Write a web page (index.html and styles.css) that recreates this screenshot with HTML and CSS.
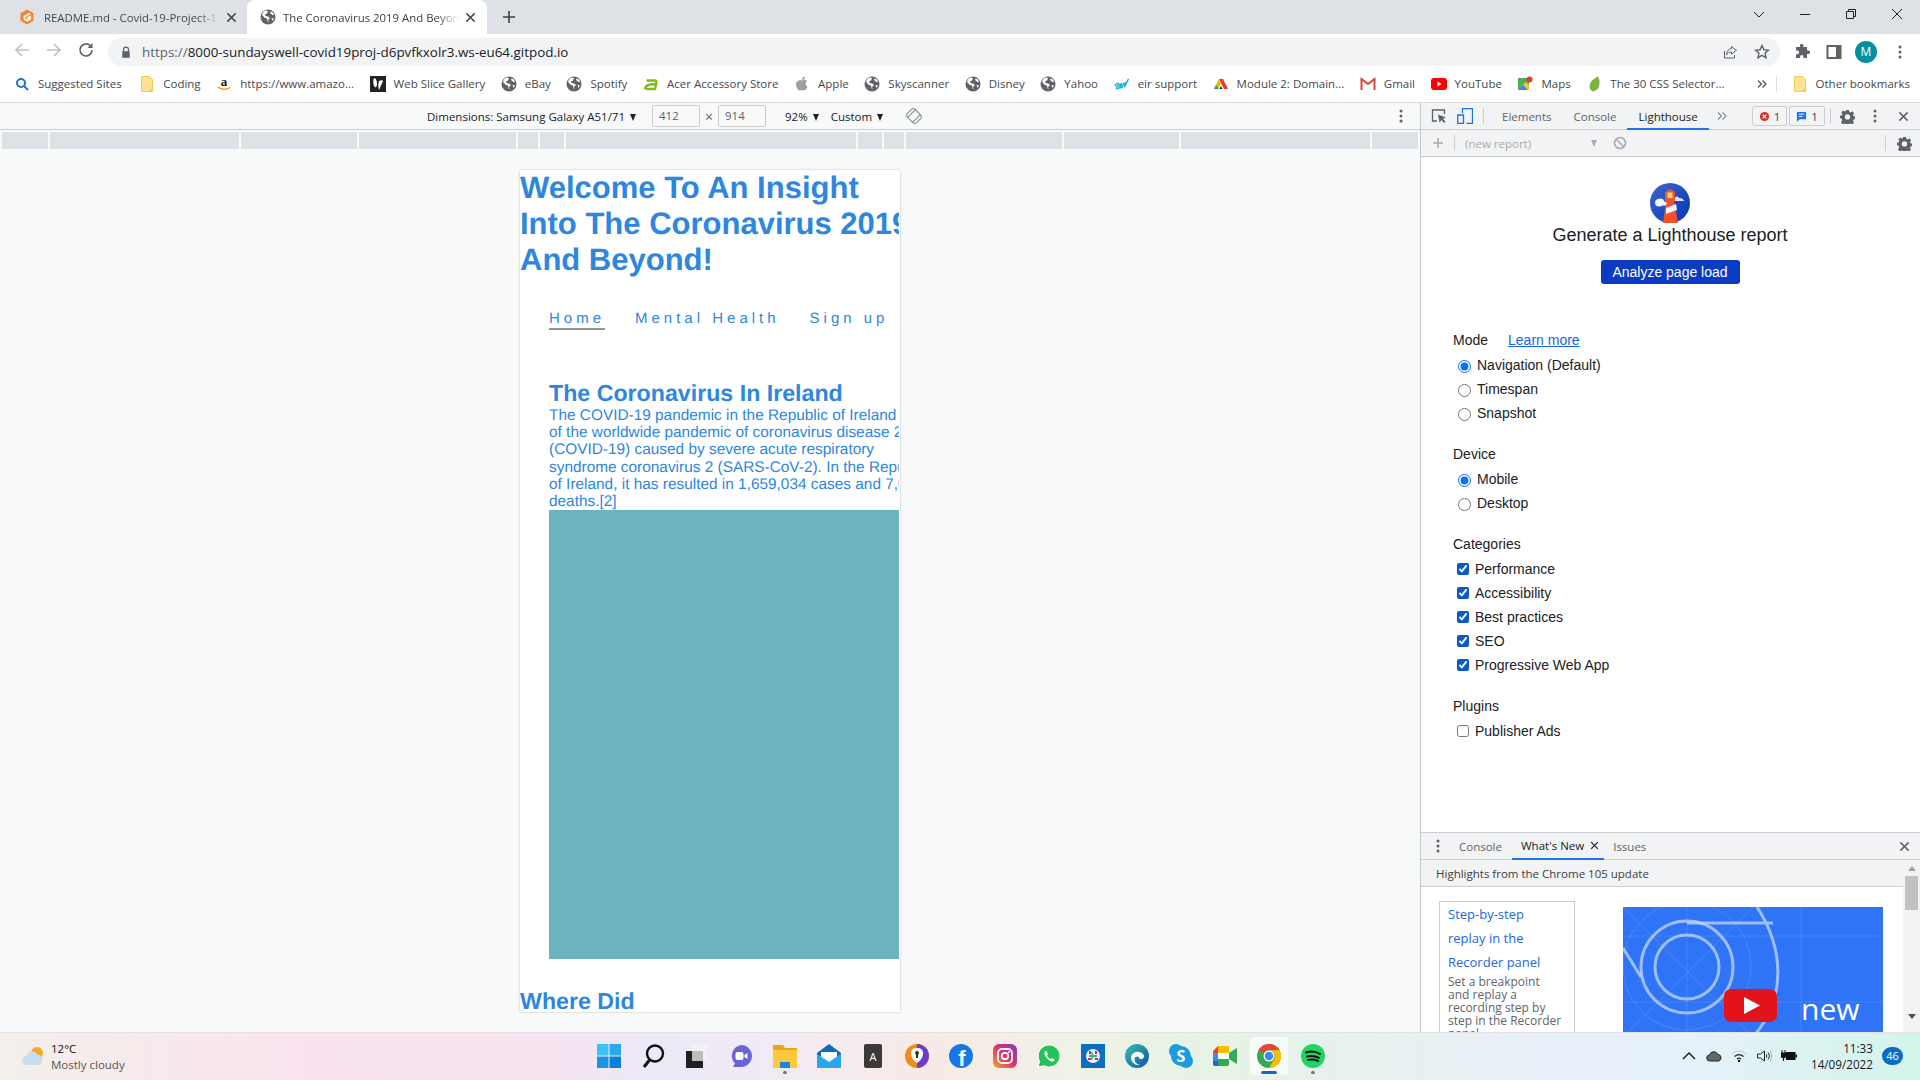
FILE: index.html
```html
<!DOCTYPE html>
<html lang="en">
<head>
	<meta charset="UTF-8">
	<title>The Coronavirus 2019 And Beyond</title>
	<link rel="stylesheet" href="styles.css">
</head>
<body>
	<svg class="defs" width="0" height="0">
		<symbol id="globe" viewBox="0 0 16 16">
			<circle cx="8" cy="8" r="7.5" fill="#5f6368"/>
			<path d="M2 6l3 3 2 .5.5 2.5 1 2-.5-3 2-2-2-1.5-2.5-.5-.5-1.5 2-1 1-2.5-2.5-.5C3.500 2 2.500 4 2 6zM10 2.500l.5 2 2 1.500 1.500 0-1-2.500zM11.500 9l1 3 1.500-2.500z" fill="#fff"/>
		</symbol>
		<symbol id="folder" viewBox="0 0 16 16">
			<path d="M2.500 .5h8l3 3v12h-11z" fill="#fde293" stroke="#f5c94f"/>
			<path d="M11 13h2.500v2.500H11z" fill="#f5c94f"/>
		</symbol>
		<symbol id="gear" viewBox="0 0 16 16">
			<path d="M6.500 1h3l.4 2 1.300.6 1.800-1.100 2 2.100-1.100 1.700.5 1.400 2 .4v2.800l-2 .4-.5 1.400 1.100 1.700-2 2.100-1.800-1.100-1.300.6-.4 2h-3l-.4-2-1.300-.6-1.800 1.100-2-2.100 1.100-1.700L2 10.300 0 9.900V7.100l2-.4.500-1.400L1.400 3.600l2-2.100 1.800 1.100 1.300-.6zM8 5.700a2.800 2.800 0 100 5.600 2.800 2.800 0 000-5.600z" fill="#5f6368" fill-rule="evenodd"/>
		</symbol>
		<symbol id="kebab" viewBox="0 0 4 16">
			<circle cx="2" cy="3" r="1.500"/><circle cx="2" cy="8" r="1.500"/><circle cx="2" cy="13" r="1.500"/>
		</symbol>
		<symbol id="cross" viewBox="0 0 12 12">
			<path d="M1.500 1.500l9 9M10.500 1.500l-9 9" stroke="currentColor" stroke-width="1.600" fill="none"/>
		</symbol>
	</svg>

	<div class="tabstrip">
		<div class="tab">
			<svg class="fav" viewBox="0 0 16 16"><path d="M8 .5l6.500 3.700v7.600L8 15.500l-6.500-3.700V4.200z" fill="#f0862e"/><path d="M11 4.500L5.500 7.500v2.800L8 11.800l3-1.700V7.800L8 9.500" fill="none" stroke="#fff" stroke-width="1.700"/></svg>
			<span class="tab-title">README.md - Covid-19-Project-1</span>
			<svg class="tab-x"><use href="#cross"/></svg>
		</div>
		<div class="tab active">
			<svg class="fav"><use href="#globe"/></svg>
			<span class="tab-title">The Coronavirus 2019 And Beyond!</span>
			<svg class="tab-x"><use href="#cross"/></svg>
		</div>
		<svg class="new-tab" viewBox="0 0 12 12"><path d="M6 0v12M0 6h12" stroke="#3c4043" stroke-width="1.600"/></svg>
		<div class="win-btns">
			<svg viewBox="0 0 12 12"><path d="M1 4l5 5 5-5" fill="none" stroke="#202124"/></svg>
			<svg viewBox="0 0 12 12"><path d="M1 6.500h10" stroke="#202124"/></svg>
			<svg viewBox="0 0 12 12"><path d="M3.500 3V1.500h7v7H9M1.500 3.500h7v7h-7z" fill="none" stroke="#202124"/></svg>
			<svg viewBox="0 0 12 12"><path d="M1 1l10 10M11 1L1 11" stroke="#202124"/></svg>
		</div>
	</div>

	<div class="toolbar">
		<svg class="nav-ic" viewBox="0 0 16 16"><path d="M15 8H2M8 2L2 8l6 6" fill="none" stroke="#bdc1c6" stroke-width="1.600"/></svg>
		<svg class="nav-ic" viewBox="0 0 16 16"><path d="M1 8h13M8 2l6 6-6 6" fill="none" stroke="#bdc1c6" stroke-width="1.600"/></svg>
		<svg class="nav-ic" viewBox="0 0 16 16"><path d="M14 8a6 6 0 11-1.800-4.300" fill="none" stroke="#5f6368" stroke-width="1.700"/><path d="M14.500 1v5h-5z" fill="#5f6368"/></svg>
		<div class="omnibox">
			<svg class="lock" viewBox="0 0 12 14"><path d="M3 6V4a3 3 0 016 0v2" fill="none" stroke="#5f6368" stroke-width="1.500"/><path d="M1.500 6h9v8h-9z" fill="#5f6368"/></svg>
			<span class="url"><span class="url-dim">https://</span>8000-sundayswell-covid19proj-d6pvfkxolr3.ws-eu64.gitpod.io</span>
			<svg class="omni-ic" viewBox="0 0 16 16"><path d="M2.500 7v7h10v-3" fill="none" stroke="#5f6368"/><path d="M9.500 2.500l5 3.800-5 3.700V8C7 8 5.500 9 4.500 11c0-4 2-6 5-6.500z" fill="none" stroke="#5f6368"/></svg>
			<svg class="omni-ic" viewBox="0 0 16 16"><path d="M8 1.500l1.900 4.300 4.600.4-3.500 3 1.100 4.600L8 11.300l-4.100 2.500L5 9.200l-3.500-3 4.600-.4z" fill="none" stroke="#5f6368" stroke-width="1.400"/></svg>
		</div>
		<div class="tool-right">
			<svg viewBox="0 0 16 16"><path d="M6 1.500a1.700 1.700 0 013.400 0V3H13v3.500h1.300a1.800 1.800 0 010 3.600H13V14H9.500v-1.300a1.700 1.700 0 00-3.400 0V14H2v-3.800h1.300a1.800 1.800 0 000-3.600H2V3h4z" fill="#5f6368"/></svg>
			<svg viewBox="0 0 16 16"><path d="M1.500 2h13v12h-13z" fill="none" stroke="#5f6368" stroke-width="2"/><path d="M10 2h5v12h-5z" fill="#5f6368"/></svg>
			<div class="avatar">M</div>
			<svg class="kebab-ic"><use href="#kebab"/></svg>
		</div>
	</div>

	<div class="bookmarks">
		<div class="bm"><svg viewBox="0 0 16 16"><circle cx="7" cy="7" r="4" fill="none" stroke="#1a73c8" stroke-width="2"/><path d="M10 10l4 4" stroke="#1a73c8" stroke-width="2"/></svg>Suggested Sites</div>
		<div class="bm"><svg><use href="#folder"/></svg>Coding</div>
		<div class="bm"><svg viewBox="0 0 16 16"><text x="8" y="10" class="amz">a</text><path d="M2 11c3 3 9 3 12 .5" fill="none" stroke="#f90" stroke-width="1.500"/></svg>https://www.amazo...</div>
		<div class="bm"><svg viewBox="0 0 16 16"><path d="M0 0h16v16H0z" fill="#202124"/><path d="M4 2c2 0 3 3 3 6 0 2-1 5-3 2-1-3-1-6 0-8zM9 5c2-1 4-1 4 0l-4 9c-1-3-1-6 0-9z" fill="#fff"/></svg>Web Slice Gallery</div>
		<div class="bm"><svg><use href="#globe"/></svg>eBay</div>
		<div class="bm"><svg><use href="#globe"/></svg>Spotify</div>
		<div class="bm"><svg viewBox="0 0 16 16"><path d="M2 13c0-3 3-5 10-5M3.500 4.500H12c2 0 1.500 2 1 4l-1 4.500H5c-2 0-3-1-3-1" fill="none" stroke="#83b81a" stroke-width="2.400"/></svg>Acer Accessory Store</div>
		<div class="bm"><svg viewBox="0 0 16 16"><path d="M8 4.500c1-.8 4-1.300 5 1-2 1.500-1.500 4 .5 5-1 2.500-2 4-3.500 4-1 0-1.500-.5-2.200-.5s-1.300.5-2.200.5C3.500 14.500 2 10.500 2 8c0-3.500 3.500-4.500 6-3.500zM8 4c0-2 1-3 3-3.500C11 2.500 10 4 8 4z" fill="#9aa0a6"/></svg>Apple</div>
		<div class="bm"><svg><use href="#globe"/></svg>Skyscanner</div>
		<div class="bm"><svg><use href="#globe"/></svg>Disney</div>
		<div class="bm"><svg><use href="#globe"/></svg>Yahoo</div>
		<div class="bm"><svg viewBox="0 0 16 16"><path d="M1 10c1-3 4-3 4-1.500S2 10 2.500 12 5 12 6 10l1.500-3-1 5 1.500-.5 1.500-4 1.500-.5-.5 4 4-8" fill="none" stroke="#18b4d6" stroke-width="1.500"/></svg>eir support</div>
		<div class="bm"><svg viewBox="0 0 16 16"><path d="M6 3h4l5 10h-4z" fill="#e23b2e"/><path d="M6 3L1 13h4l3-6z" fill="#f5b400"/><path d="M1 13l2-4 3 4z" fill="#2ea24c"/><path d="M6.500 13L8 10l1.500 3z" fill="#202124"/></svg>Module 2: Domain...</div>
		<div class="bm"><svg viewBox="0 0 16 16"><path d="M1.500 14V3l6.500 5 6.500-5v11" fill="none" stroke="#d9453a" stroke-width="2"/></svg>Gmail</div>
		<div class="bm"><svg viewBox="0 0 16 16"><rect y="2" width="16" height="12" rx="3" fill="#f00"/><path d="M6.500 5.500l4 2.500-4 2.500z" fill="#fff"/></svg>YouTube</div>
		<div class="bm"><svg viewBox="0 0 16 16"><path d="M1 2h11v12H1z" fill="#4caf50"/><path d="M1 14L9 6l3 3v5z" fill="#fbc02d"/><path d="M1 14l5-5 5 5z" fill="#4285f4"/><circle cx="12.500" cy="3.500" r="3" fill="#e53935"/></svg>Maps</div>
		<div class="bm"><svg viewBox="0 0 16 16"><path d="M12 .5c3 5 2 14-5 15C2 14 1.500 5 12 .5z" fill="#7cb342"/></svg>The 30 CSS Selector...</div>
		<div class="bm-end">
			<svg class="more" viewBox="0 0 10 10"><path d="M1 1.500L4.500 5 1 8.500M5.500 1.500L9 5 5.500 8.500" fill="none" stroke="#5f6368" stroke-width="1.500"/></svg>
			<span class="bm-sep"></span>
			<div class="bm"><svg><use href="#folder"/></svg>Other bookmarks</div>
		</div>
	</div>

	<div class="main">
		<div class="viewport">
			<div class="device-bar">
				<span class="dim-label">Dimensions: Samsung Galaxy A51/71 <i class="caret"></i></span>
				<span class="dim-box">412</span>
				<span class="dim-x">×</span>
				<span class="dim-box">914</span>
				<span class="dim-zoom">92% <i class="caret"></i></span>
				<span class="dim-custom">Custom <i class="caret"></i></span>
				<svg class="rotate" viewBox="0 0 16 16"><g transform="rotate(-45 8 8)" fill="none" stroke="#80868b"><rect x="2.500" y="1.500" width="11" height="13" rx="3"/><path d="M2.500 4.500h11M2.500 11.500h11"/></g></svg>
				<svg class="kebab-ic dev-kebab"><use href="#kebab"/></svg>
			</div>
			<div class="ruler"><i></i><i></i><i></i><i></i><i></i><i></i><i></i><i></i><i></i><i></i><i></i><i></i><i></i></div>
			<div class="stage">
				<div class="page">
					<h1>Welcome To An Insight<br>Into The Coronavirus 2019<br>And Beyond!</h1>
					<ul class="site-nav">
						<li class="current">Home</li>
						<li>Mental Health</li>
						<li>Sign up</li>
					</ul>
					<section class="intro">
						<h2>The Coronavirus In Ireland</h2>
						<p>The COVID-19 pandemic in the Republic of Ireland is part<br>of the worldwide pandemic of coronavirus disease 2019<br>(COVID-19) caused by severe acute respiratory<br>syndrome coronavirus 2 (SARS-CoV-2). In the Republic<br>of Ireland, it has resulted in 1,659,034 cases and 7,000<br>deaths.[2]</p>
						<div class="hero"></div>
					</section>
					<h2 class="where">Where Did</h2>
				</div>
			</div>
		</div>

		<div class="devtools">
			<div class="dt-bar">
				<svg class="dt-inspect" viewBox="0 0 16 16"><path d="M6 13H1.500V2h12v4" fill="none" stroke="#5f6368" stroke-width="1.300"/><path d="M7 6.500l8 3-3 1.300 2.500 3-1.500 1.300-2.500-3-2 2.400z" fill="#5f6368"/></svg>
				<svg class="dt-device" viewBox="0 0 16 16"><path d="M5.500 5V.7h10v14.600h-6M.7 7h5.800v8.300H.7z" fill="none" stroke="#1a73e8" stroke-width="1.300"/></svg>
				<span class="dt-sep"></span>
				<span class="dt-tab">Elements</span>
				<span class="dt-tab">Console</span>
				<span class="dt-tab on">Lighthouse</span>
				<svg class="dt-more" viewBox="0 0 10 10"><path d="M1 1.500L4.500 5 1 8.500M5.500 1.500L9 5 5.500 8.500" fill="none" stroke="#80868b" stroke-width="1.100"/></svg>
				<span class="count first"><svg viewBox="0 0 12 12"><circle cx="6" cy="6" r="5" fill="#d93025"/><path d="M4 4l4 4M8 4l-4 4" stroke="#fff" stroke-width="1.300"/></svg>1</span>
				<span class="count"><svg viewBox="0 0 12 12"><path d="M1 1h10v8H4l-3 3z" fill="#1a73e8"/><path d="M3 3.500h6M3 6h4" stroke="#fff"/></svg>1</span>
				<span class="dt-sep sep2"></span>
				<svg class="dt-gear"><use href="#gear"/></svg>
				<svg class="kebab-ic dt-kebab"><use href="#kebab"/></svg>
				<svg class="dt-close"><use href="#cross"/></svg>
			</div>
			<div class="dt-sub">
				<svg class="sub-plus" viewBox="0 0 12 12"><path d="M6 1v10M1 6h10" stroke="#a8abaf" stroke-width="1.500"/></svg>
				<span class="dt-sep sub-sep"></span>
				<span class="report-name">(new report)</span>
				<i class="caret grey"></i>
				<svg class="sub-block" viewBox="0 0 14 14"><circle cx="7" cy="7" r="5.500" fill="none" stroke="#a8abaf" stroke-width="1.600"/><path d="M3 3l8 8" stroke="#a8abaf" stroke-width="1.600"/></svg>
				<span class="dt-sep sub-sep2"></span>
				<svg class="dt-gear sub-gear"><use href="#gear"/></svg>
			</div>

			<div class="lh-panel">
				<div class="lh-head">
					<svg class="lh-logo" viewBox="0 0 40 40">
						<defs><linearGradient id="lhblue" x1="0" y1="0" x2="1" y2="1"><stop offset="0" stop-color="#3f65cf"/><stop offset="1" stop-color="#0536b3"/></linearGradient></defs>
						<circle cx="20" cy="20" r="20" fill="url(#lhblue)"/>
						<path d="M13 40l3-22h8l4 22a20 20 0 01-15 0z" fill="#f4502a"/>
						<path d="M15 9l5-3 5 3v9H15z" fill="#e8573a"/>
						<path d="M17.500 9.500h5V15h-5z" fill="#fdd663"/>
						<path d="M16 25l10-4 1 6-11 4z" fill="#f1f3f4"/>
						<path d="M5 20a3.500 3.500 0 014-4c2-1 5 0 5 2l3 2c0 2-2 3-4 2.500C10 24 5 24 5 20z" fill="#f1f3f4"/>
						<path d="M25 15c1-2 3-2 4 0 2-.5 5 1 5 3h-9z" fill="#dbe3f7"/>
					</svg>
					<h3>Generate a Lighthouse report</h3>
					<button class="analyze">Analyze page load</button>
				</div>
				<form class="lh-form">
					<div class="lh-label">Mode<a class="learn">Learn more</a></div>
					<label class="rad"><input type="radio" name="mode" checked>Navigation (Default)</label>
					<label class="rad"><input type="radio" name="mode">Timespan</label>
					<label class="rad"><input type="radio" name="mode">Snapshot</label>
					<div class="lh-label gap">Device</div>
					<label class="rad"><input type="radio" name="device" checked>Mobile</label>
					<label class="rad"><input type="radio" name="device">Desktop</label>
					<div class="lh-label gap">Categories</div>
					<label class="chk"><input type="checkbox" checked>Performance</label>
					<label class="chk"><input type="checkbox" checked>Accessibility</label>
					<label class="chk"><input type="checkbox" checked>Best practices</label>
					<label class="chk"><input type="checkbox" checked>SEO</label>
					<label class="chk"><input type="checkbox" checked>Progressive Web App</label>
					<div class="lh-label gap">Plugins</div>
					<label class="chk"><input type="checkbox">Publisher Ads</label>
				</form>
			</div>

			<div class="drawer">
				<div class="drawer-tabs">
					<svg class="kebab-ic drawer-kebab"><use href="#kebab"/></svg>
					<span class="dr-tab">Console</span>
					<span class="dr-tab on">What's New<svg class="dr-x"><use href="#cross"/></svg></span>
					<span class="dr-tab">Issues</span>
					<svg class="dt-close"><use href="#cross"/></svg>
				</div>
				<div class="drawer-body">
					<div class="drawer-main">
						<div class="highlights">Highlights from the Chrome 105 update</div>
						<div class="news">
							<div class="news-card">
								<a>Step-by-step replay in the Recorder panel</a>
								<p>Set a breakpoint<br>and replay a<br>recording step by<br>step in the Recorder<br>panel</p>
							</div>
							<div class="video">
								<svg viewBox="0 0 260 130">
									<rect width="260" height="130" fill="#2f74f6"/>
									<g fill="none" stroke="#fff" stroke-opacity=".12">
										<path d="M0 29h260M0 95h260M64 0v130M178 0v130"/>
										<circle cx="64" cy="59" r="64"/>
										<path d="M0 0l130 130M130 0L0 130"/>
									</g>
									<g fill="none" stroke="#c3d7fb" stroke-opacity=".75" stroke-width="3">
										<circle cx="64" cy="60" r="46"/>
										<circle cx="64" cy="60" r="32"/>
										<path d="M64 16h86M0 41l18 29M134 0c26 40 31 90-4 130"/>
									</g>
									<rect x="101" y="82" width="53" height="33" rx="7" fill="#e3131b"/>
									<path d="M121 90l16 8.500-16 8.500z" fill="#fff"/>
									<text x="178" y="113" class="vid-new">new</text>
								</svg>
							</div>
						</div>
					</div>
					<div class="dr-scroll">
						<i class="sc-up"></i>
						<b class="sc-thumb"></b>
						<i class="sc-down"></i>
					</div>
				</div>
			</div>
		</div>
	</div>

	<div class="taskbar">
		<div class="weather">
			<svg viewBox="0 0 24 24"><circle cx="16" cy="8" r="6" fill="#f9a825"/><path d="M6 20a4.500 4.500 0 01-.5-9 6 6 0 0111-1.500A5.500 5.500 0 0118 20z" fill="#c7ddf0"/></svg>
			<div><div class="temp">12°C</div><div class="sky">Mostly cloudy</div></div>
		</div>
		<div class="apps">
			<svg viewBox="0 0 24 24"><path d="M0 0h11.500v11.500H0z" fill="#3cc0f5"/><path d="M12.500 0H24v11.500H12.500z" fill="#2aa8ee"/><path d="M0 12.500h11.500V24H0z" fill="#1a94e6"/><path d="M12.500 12.500H24V24H12.500z" fill="#0b80d8"/></svg>
			<svg viewBox="0 0 24 24"><circle cx="14" cy="9.500" r="8" fill="none" stroke="#111" stroke-width="2.400"/><path d="M8.500 16L3 23" stroke="#111" stroke-width="3"/></svg>
			<svg viewBox="0 0 24 24"><path d="M7 1h15v16H7z" fill="#f2f2f2"/><path d="M1 7h17v17H1z" fill="#202020"/><path d="M7 7h11v10H7z" fill="#bdbdbd"/></svg>
			<svg viewBox="0 0 24 24"><path d="M12 1a11 11 0 0111 11 11 11 0 01-11 11H4l2-3.500A11 11 0 0112 1z" fill="#6b63d6"/><rect x="6.500" y="8" width="8" height="8" rx="2" fill="#fff"/><path d="M15.500 11l3-2v6l-3-2z" fill="#fff"/></svg>
			<div class="app-slot running">
				<svg viewBox="0 0 24 24"><path d="M0 1h10l2 3h12v4H0z" fill="#e8a61a"/><path d="M0 6h24v18H0z" fill="#fcc93a"/><path d="M7 18h10v6H7z" fill="#1a86d8"/></svg>
			</div>
			<svg viewBox="0 0 24 24"><path d="M12 0l12 9v15H0V9z" fill="#0f6cbd"/><path d="M4 8h16v6l-8 5-8-5z" fill="#fff"/><path d="M0 10l12 8 12-8v14H0z" fill="#2aa6ee"/></svg>
			<svg viewBox="0 0 24 24"><rect x="3" width="18" height="24" rx="2" fill="#3a3a3a"/><text x="12" y="17" class="tb-a">A</text></svg>
			<svg viewBox="0 0 24 24"><circle cx="12" cy="12" r="12" fill="#f28a1c"/><path d="M12 0a12 12 0 0112 12c0 6-5 12-12 12z" fill="#6a3fc8"/><path d="M12 4c4 0 6 2 6 5 0 5-3 8-6 10-3-2-6-5-6-10 0-3 2-5 6-5z" fill="#fff"/><circle cx="12" cy="9" r="2" fill="#333"/><path d="M11 10h2v4h-2z" fill="#333"/></svg>
			<svg viewBox="0 0 24 24"><circle cx="12" cy="12" r="12" fill="#1678e5"/><text x="13" y="22" class="tb-f">f</text></svg>
			<svg viewBox="0 0 24 24">
				<defs><linearGradient id="insta" x1="0" y1="1" x2="1" y2="0"><stop offset="0" stop-color="#f9a52b"/><stop offset=".5" stop-color="#e1306c"/><stop offset="1" stop-color="#7b3bc0"/></linearGradient></defs>
				<rect width="24" height="24" rx="6" fill="url(#insta)"/><rect x="5" y="5" width="14" height="14" rx="4" fill="none" stroke="#fff" stroke-width="1.800"/><circle cx="12" cy="12" r="3.200" fill="none" stroke="#fff" stroke-width="1.800"/><circle cx="16" cy="8" r="1" fill="#fff"/>
			</svg>
			<svg viewBox="0 0 24 24"><path d="M12 1a11 11 0 11-5 20.800L1 23l1.600-5.600A11 11 0 0112 1z" fill="#25c15a" stroke="#fff"/><path d="M8 7c-1 1-1 3 1 6s5 5 7 4.500c1-.3 1.500-1 1.500-2l-2.500-1.500-1 1c-2-.5-3.500-2-4-4l1-1L9.500 7z" fill="#fff"/></svg>
			<svg viewBox="0 0 24 24"><path d="M0 0h24v24H0z" fill="#0a6fc2"/><circle cx="12" cy="12" r="7" fill="#f4f4f4"/><path d="M9 7v3M15 7v3M7 15h3M14 15h3" stroke="#e01e5a" stroke-width="2"/><path d="M11 8v8" stroke="#36c5f0" stroke-width="2"/><path d="M8 12h8" stroke="#2eb67d" stroke-width="2"/></svg>
			<svg viewBox="0 0 24 24">
				<defs><linearGradient id="edge" x1="0" y1="0" x2="1" y2="1"><stop offset="0" stop-color="#36c2a8"/><stop offset="1" stop-color="#0d52a8"/></linearGradient></defs>
				<circle cx="12" cy="12" r="12" fill="url(#edge)"/><path d="M6 13c1-5 8-7 12-3 2 2 1 5-2 5-2 0-2-1-2-2-4-2-6 2-3 6 1 1 3 2 4 2-5 1-9-3-9-8z" fill="#fff"/>
			</svg>
			<svg viewBox="0 0 24 24"><circle cx="7" cy="7" r="7" fill="#1c9ce0"/><circle cx="17" cy="17" r="7" fill="#1c9ce0"/><circle cx="12" cy="12" r="10" fill="#1c9ce0"/><text x="12" y="17.500" class="tb-s">S</text></svg>
			<svg viewBox="0 0 24 24"><path d="M5 2h11v7H5z" fill="#fbbc04"/><path d="M0 7l5-5v7H0z" fill="#ea4335"/><path d="M0 9h5v8H0z" fill="#4285f4"/><path d="M0 17h5v5H2a2 2 0 01-2-2z" fill="#1967d2"/><path d="M5 15h11v5a2 2 0 01-2 2H5z" fill="#34a853"/><path d="M16 9l8-5v16l-8-5z" fill="#34a853"/><path d="M5 9h11v6H5z" fill="#fff"/></svg>
			<div class="app-slot focused">
				<svg viewBox="0 0 24 24"><circle cx="12" cy="12" r="12" fill="#34a853"/><path d="M12 0a12 12 0 0110.400 6H12a6 6 0 00-5.200 3L1.600 6A12 12 0 0112 0z" fill="#ea4335"/><path d="M22.400 6A12 12 0 0112 24l5.200-9A6 6 0 0012 6z" fill="#fbbc04"/><circle cx="12" cy="12" r="5.500" fill="#fff"/><circle cx="12" cy="12" r="4.300" fill="#4285f4"/></svg>
			</div>
			<div class="app-slot running">
				<svg viewBox="0 0 24 24"><circle cx="12" cy="12" r="12" fill="#1ed760"/><path d="M5 8.500c5-1.500 10-1 14 1.500M6 12.500c4-1 8-.7 12 1.300M7 16c3.500-.8 6.500-.5 10 1" fill="none" stroke="#111" stroke-width="2" stroke-linecap="round"/></svg>
			</div>
		</div>
		<div class="tray">
			<svg viewBox="0 0 14 14"><path d="M1 10l6-6 6 6" fill="none" stroke="#111" stroke-width="1.300"/></svg>
			<svg viewBox="0 0 16 14"><path d="M4 12a3 3 0 01-.5-6 4.500 4.500 0 018.500-.5A3.300 3.300 0 0112.500 12z" fill="#666" stroke="#222"/></svg>
			<svg viewBox="0 0 16 14"><path d="M1 5c4-4 10-4 14 0" fill="none" stroke="#c0c4c8"/><path d="M3.500 7.500c3-2.500 6-2.500 9 0M6 10c1.300-1 2.700-1 4 0" fill="none" stroke="#222" stroke-width="1.200"/><circle cx="8" cy="12" r="1.200"/></svg>
			<svg viewBox="0 0 16 14"><path d="M1.500 5h3l4-3v10l-4-3h-3z" fill="none" stroke="#222"/><path d="M10 5c1 1 1 3 0 4M12 3.500c1.800 2 1.800 5 0 7" fill="none" stroke="#222"/><path d="M14 2c2.300 3 2.300 7 0 10" fill="none" stroke="#aaa"/></svg>
			<svg viewBox="0 0 16 14"><path d="M1 1v3M4 1v3M0 4h5v2.500a2.500 2.500 0 01-5 0z" stroke="#111" fill="#111"/><path d="M2.500 9v3" stroke="#111"/><rect x="5" y="3" width="9.500" height="8" fill="#111"/><path d="M14.500 5.500H16v3h-1.500z" fill="#111"/></svg>
			<div class="clock"><div>11:33</div><div>14/09/2022</div></div>
			<span class="notify">46</span>
		</div>
	</div>
</body>
</html>
```

FILE: styles.css
```css
*{
	margin: 0;
	padding: 0;
	box-sizing: border-box;
}
html, body{
	width: 1920px;
	height: 1080px;
	overflow: hidden;
}
body{
	font-family: "Open Sans", "Liberation Sans", sans-serif;
	font-size: 11.500px;
	color: #3c4043;
	background: #fff;
}
svg{
	display: block;
	flex: none;
}
.defs{
	position: absolute;
}
.caret{
	display: inline-block;
	width: 0;
	height: 0;
	border-left: 3.500px solid transparent;
	border-right: 3.500px solid transparent;
	border-top: 7px solid #202124;
	margin-left: 2px;
}
.caret.grey{
	border-top-color: #a8abaf;
	margin-left: 60px;
}
.kebab-ic{
	width: 4px;
	height: 16px;
	fill: #5f6368;
}

/* browser chrome */
.tabstrip{
	height: 34px;
	background: #dee1e6;
	display: flex;
	align-items: flex-end;
	padding-left: 10px;
}
.tab{
	width: 237px;
	height: 34px;
	padding: 0 10px 0 4px;
	display: flex;
	align-items: center;
	position: relative;
	border-radius: 8px 8px 0 0;
	color: #45484d;
}
.tab + .tab{
	width: 240px;
	padding-left: 13px;
}
.tab.active{
	background: #fff;
	color: #3c4043;
}
.fav{
	width: 16px;
	height: 16px;
}
.tab:first-child .fav{
	margin-left: 5px;
}
.tab-title{
	margin-left: 7px;
	width: 176px;
	font-size: 11.400px;
	white-space: nowrap;
	overflow: hidden;
	-webkit-mask-image: linear-gradient(to right, #000 88%, transparent);
}
.tab:first-child .tab-title{
	margin-left: 9px;
}
.tab-x{
	width: 11px;
	height: 11px;
	margin-left: 6px;
	color: #45484d;
}
.tab:first-child .tab-x{
	margin-left: 7px;
}
.new-tab{
	width: 12px;
	height: 12px;
	margin: 0 auto 11px 16px;
}
.win-btns{
	display: flex;
	align-self: flex-start;
	gap: 34px;
	padding: 8px 17px 0 0;
}
.win-btns svg{
	width: 12px;
	height: 12px;
}
.toolbar{
	height: 32px;
	display: flex;
	align-items: center;
	padding: 4px 0 0 14px;
	background: #fff;
}
.nav-ic{
	width: 16px;
	height: 16px;
	margin-right: 16px;
	position: relative;
	top: -2px;
}
.nav-ic:nth-child(3){
	margin-right: 14px;
}
.omnibox{
	width: 1672px;
	height: 28px;
	background: #f1f3f4;
	border-radius: 14px;
	display: flex;
	align-items: center;
	padding: 0 10px 0 13px;
}
.lock{
	width: 10px;
	height: 12px;
}
.url{
	margin-left: 11px;
	font-size: 13.400px;
	color: #202124;
	white-space: nowrap;
}
.url-dim{
	color: #5f6368;
}
.omni-ic{
	width: 16px;
	height: 16px;
	margin-left: 16px;
}
.url + .omni-ic{
	margin-left: auto;
}
.tool-right{
	display: flex;
	align-items: center;
	padding-left: 14px;
}
.tool-right svg{
	width: 16px;
	height: 16px;
	margin-right: 16px;
}
.tool-right .kebab-ic{
	width: 4px;
	margin: 0 0 0 21px;
}
.avatar{
	width: 22px;
	height: 22px;
	border-radius: 50%;
	background: #00919e;
	color: #fff;
	text-align: center;
	line-height: 22px;
	font-size: 12px;
	margin-left: -3px;
}
.bookmarks{
	height: 37px;
	display: flex;
	align-items: center;
	gap: 15.600px;
	padding: 0 10px 1px 14px;
	border-bottom: 1px solid #dadce0;
	background: #fff;
	white-space: nowrap;
}
.bm{
	display: flex;
	align-items: center;
	gap: 8px;
	font-size: 11.500px;
	color: #45484d;
}
.bm:first-child{
	margin-right: 2px;
}
.bm svg{
	width: 16px;
	height: 16px;
}
.bm-end{
	margin-left: auto;
	display: flex;
	align-items: center;
}
.more{
	width: 10px;
	height: 10px;
	margin-right: 9px;
}
.bm-sep{
	width: 1px;
	height: 16px;
	background: #dadce0;
	margin-right: 15px;
}
.amz{
	font: bold 13px "Liberation Serif", serif;
	text-anchor: middle;
	fill: #111;
}

/* device mode */
.main{
	display: flex;
	height: 929px;
}
.viewport{
	width: 1420px;
	background: #f8f9f9;
	display: flex;
	flex-direction: column;
}
.device-bar{
	height: 27px;
	display: flex;
	align-items: center;
	padding-left: 427px;
	background: #f8f9f9;
	border-bottom: 1px solid #cbcdd1;
	color: #202124;
	white-space: nowrap;
}
.dim-box{
	width: 48px;
	height: 22px;
	border: 1px solid #ccc;
	border-radius: 2px;
	line-height: 20px;
	padding-left: 6px;
	color: #5f6368;
	margin-left: 16px;
}
.dim-x{
	margin: 0 0 0 5px;
	color: #5f6368;
	font-size: 14px;
}
.dim-x + .dim-box{
	margin-left: 5px;
}
.dim-zoom{
	margin-left: 19px;
}
.dim-custom{
	margin-left: 12px;
}
.rotate{
	width: 16px;
	height: 16px;
	margin-left: 23px;
}
.dev-kebab{
	margin-left: auto;
	margin-right: 17px;
}
.ruler{
	display: grid;
	grid-template-columns: 46px 189px 116px 157px 20px 24px 290px 24px 20px 156px 115px 189px 46px;
	gap: 2px;
	height: 17px;
	margin: 2px 0 0 2px;
}
.ruler i{
	background: #dee1e6;
}
.stage{
	flex: 1;
	padding: 21px 0 0 520px;
}

/* the page on the phone */
.page{
	width: 380px;
	height: 842px;
	background: #fff;
	border-right: 1px solid #fff;
	box-shadow: 0 0 2px rgba(0,0,0,0.25);
	overflow: hidden;
	white-space: nowrap;
	font-family: "Liberation Sans", Arial, sans-serif;
	color: #2e86de;
	text-rendering: geometricPrecision;
}
.page h1{
	font-size: 31px;
	line-height: 36px;
}
.site-nav{
	list-style: none;
	display: flex;
	gap: 30px;
	padding: 32px 0 0 29px;
	font-size: 15px;
	letter-spacing: 4px;
	height: 101px;
}
.site-nav li{
	height: 20px;
	line-height: 18px;
}
.site-nav .current{
	border-bottom: 2px solid #8a9499;
}
.intro{
	padding: 0 0 0 29px;
}
.intro h2, .where{
	font-size: 23.200px;
	line-height: 28px;
}
.intro p{
	font-size: 15.400px;
	line-height: 17.200px;
}
.hero{
	width: 360px;
	height: 449px;
	background: #6bb3be;
}
.where{
	margin-top: 28px;
}

/* devtools */
.devtools{
	width: 500px;
	border-left: 1px solid #c4c7cc;
	display: flex;
	flex-direction: column;
	background: #fff;
	color: #5f6368;
}
.dt-bar{
	height: 27px;
	display: flex;
	align-items: center;
	background: #f1f3f4;
	border-bottom: 1px solid #cbcdd1;
	padding-left: 10px;
}
.dt-inspect{
	width: 16px;
	height: 16px;
}
.dt-device{
	width: 16px;
	height: 16px;
	margin-left: 10px;
}
.dt-sep{
	width: 1px;
	height: 16px;
	background: #cbcdd1;
	margin-left: 10px;
}
.dt-tab{
	height: 27px;
	line-height: 27px;
	padding: 0 11px;
}
.dt-sep + .dt-tab{
	margin-left: 7px;
}
.dt-tab.on{
	color: #202124;
	border-bottom: 2px solid #1a73e8;
}
.dt-more{
	width: 10px;
	height: 10px;
	margin-left: 8px;
}
.count{
	display: flex;
	align-items: center;
	gap: 4px;
	height: 20px;
	border: 1px solid #cbcdd1;
	border-radius: 2px;
	padding: 0 6px;
	margin-left: 2px;
	color: #45484d;
}
.count.first{
	margin-left: 25px;
}
.count svg{
	width: 11px;
	height: 11px;
}
.sep2{
	margin-left: 5px;
}
.dt-gear{
	width: 15px;
	height: 15px;
	margin-left: 9px;
}
.dt-kebab{
	margin-left: 18px;
}
.dt-close{
	width: 11px;
	height: 11px;
	margin-left: 21px;
	color: #5f6368;
}
.dt-sub{
	height: 27px;
	display: flex;
	align-items: center;
	background: #f1f3f4;
	border-bottom: 1px solid #cbcdd1;
	padding-left: 11px;
}
.sub-plus{
	width: 12px;
	height: 12px;
}
.sub-sep{
	margin-left: 10px;
}
.report-name{
	margin-left: 10px;
	color: #a8abaf;
}
.sub-block{
	width: 14px;
	height: 14px;
	margin-left: 16px;
}
.sub-sep2{
	margin-left: auto;
}
.sub-gear{
	margin: 0 8px 0 11px;
}

/* lighthouse */
.lh-panel{
	flex: 1;
	font-family: "Liberation Sans", Arial, sans-serif;
	font-size: 14px;
	color: #202124;
	padding-top: 26px;
}
.lh-head{
	display: flex;
	flex-direction: column;
	align-items: center;
	margin-left: -1px;
}
.lh-logo{
	width: 40px;
	height: 40px;
}
.lh-head h3{
	font-size: 18px;
	font-weight: normal;
	line-height: 24px;
}
.analyze{
	margin-top: 13px;
	width: 139px;
	height: 24px;
	background: #0b3bc1;
	color: #fff;
	border: none;
	border-radius: 3px;
	font: 14px "Liberation Sans", Arial, sans-serif;
}
.lh-form{
	margin-top: 44px;
	padding-left: 32px;
}
.lh-label{
	height: 25px;
	line-height: 24px;
}
.lh-label.gap{
	margin-top: 17px;
}
.learn{
	margin-left: 20px;
	color: #1a66e8;
	text-decoration: underline;
}
.rad, .chk{
	display: flex;
	align-items: center;
	height: 24px;
}
.rad input{
	margin: 2px 6px 0 5px;
	accent-color: #0d6efd;
}
.chk input{
	width: 12px;
	height: 12px;
	margin: 0 6px 0 4px;
	accent-color: #0b57d0;
}

/* drawer */
.drawer{
	height: 200px;
	overflow: hidden;
	border-top: 1px solid #cbcdd1;
}
.drawer-tabs{
	height: 27px;
	display: flex;
	align-items: center;
	background: #f1f3f4;
	border-bottom: 1px solid #cbcdd1;
	padding-left: 15px;
}
.drawer-tabs .dt-close{
	margin-left: auto;
	margin-right: 10px;
}
.dr-tab{
	display: flex;
	align-items: center;
	height: 27px;
	padding: 0 9px;
}
.drawer-kebab + .dr-tab{
	margin-left: 10px;
	margin-right: 1px;
}
.dr-tab.on{
	color: #202124;
	border-bottom: 2px solid #1a73e8;
	padding-right: 5px;
}
.dr-x{
	width: 9px;
	height: 9px;
	margin-left: 6px;
	color: #202124;
}
.drawer-body{
	display: flex;
	height: 172px;
}
.drawer-main{
	flex: 1;
}
.highlights{
	height: 27px;
	line-height: 28px;
	background: #f1f3f4;
	border-bottom: 1px solid #cbcdd1;
	padding-left: 15px;
	color: #3c4043;
}
.news{
	display: flex;
	padding: 14px 0 0 18px;
}
.news-card{
	width: 136px;
	height: 180px;
	border: 1px solid #cbcdd1;
	padding: 0 8px;
}
.news-card a{
	display: block;
	color: #1a66e8;
	font-size: 13px;
	line-height: 24px;
	padding-right: 15px;
}
.news-card p{
	font-size: 12px;
	line-height: 13px;
	color: #5f6368;
	margin-top: 1px;
}
.video{
	margin: 6px 0 0 48px;
}
.video svg{
	width: 260px;
	height: 130px;
}
.vid-new{
	font: 30px "Open Sans", sans-serif;
	fill: #fff;
}
.dr-scroll{
	width: 17px;
	background: #f1f3f4;
	display: flex;
	flex-direction: column;
	align-items: center;
	padding-top: 6px;
}
.dr-scroll .sc-up{
	width: 0;
	height: 0;
	border-left: 4px solid transparent;
	border-right: 4px solid transparent;
	border-bottom: 5px solid #a3a3a3;
}
.sc-thumb{
	width: 13px;
	height: 34px;
	background: #c1c1c1;
	margin-top: 5px;
}
.dr-scroll .sc-down{
	width: 0;
	height: 0;
	border-left: 4px solid transparent;
	border-right: 4px solid transparent;
	border-top: 5px solid #505050;
	margin-top: 104px;
}

/* taskbar */
.taskbar{
	height: 48px;
	display: grid;
	grid-template-columns: 597px 1fr auto;
	align-items: center;
	padding-bottom: 2px;
	background: linear-gradient(to right, #f3efe9 0%, #fae3ef 16%, #f8e3f0 28%, #ece9f8 34%, #f3ebf2 42%, #f8e9e6 48%, #eff2e6 56%, #e6f3e4 62%, #e8eff8 80%, #e6f1fa 88%, #d2f5ea 100%);
	border-top: 1px solid #e6e2e6;
	position: relative;
	z-index: 2;
}
.weather{
	display: flex;
	align-items: center;
	padding: 2px 0 0 21px;
	gap: 6px;
}
.weather svg{
	width: 24px;
	height: 24px;
}
.temp{
	color: #111;
	line-height: 16px;
}
.sky{
	color: #555;
	line-height: 16px;
}
.apps{
	display: flex;
	align-items: center;
	gap: 20px;
}
.apps svg{
	width: 24px;
	height: 24px;
}
.app-slot{
	width: 24px;
	height: 24px;
	position: relative;
}
.app-slot svg{
	position: relative;
}
.running::after{
	content: "";
	position: absolute;
	left: 10px;
	top: 27px;
	width: 4px;
	height: 3px;
	border-radius: 2px;
	background: #77797c;
}
.focused::before{
	content: "";
	position: absolute;
	left: -7px;
	top: -7px;
	width: 38px;
	height: 38px;
	background: rgba(255,255,255,0.65);
	border-radius: 4px;
}
.focused::after{
	content: "";
	position: absolute;
	left: 4px;
	top: 27px;
	width: 16px;
	height: 3px;
	border-radius: 2px;
	background: #0b6cc4;
}
.tb-a{
	font: 11px "Open Sans", sans-serif;
	fill: #fff;
	text-anchor: middle;
}
.tb-f{
	font: bold 22px "Liberation Sans", sans-serif;
	fill: #fff;
	text-anchor: middle;
}
.tb-s{
	font: bold 16px "Open Sans", sans-serif;
	fill: #fff;
	text-anchor: middle;
}
.tray{
	display: flex;
	align-items: center;
	padding-right: 17px;
	gap: 9px;
}
.tray svg{
	width: 16px;
	height: 14px;
}
.clock{
	text-align: right;
	font-size: 11.700px;
	line-height: 16px;
	color: #1a1a1a;
	margin-left: 5px;
}
.notify{
	width: 21px;
	height: 18px;
	border-radius: 9px;
	background: #0b6cc4;
	color: #fff;
	font-size: 11px;
	line-height: 18px;
	text-align: center;
}
```
